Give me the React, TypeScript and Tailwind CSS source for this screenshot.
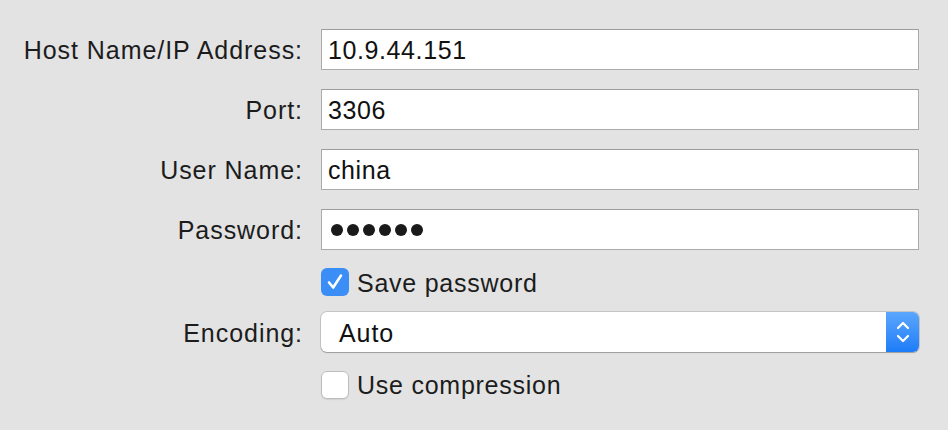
import React from "react";

const font = "font-['Liberation_Sans',Arial,sans-serif]";

type RowProps = {
  label?: string;
  className?: string;
  children: React.ReactNode;
};

function Row({ label, className, children }: RowProps) {
  return (
    <div className={`flex items-center ${className ?? ""}`}>
      <div className="w-[303px] shrink-0 pt-[3px] text-right text-[25px] tracking-[0.95px] text-[#1c1c1c]">
        {label}
      </div>
      <div className="ml-[18px] w-[598px]">{children}</div>
    </div>
  );
}

function TextField({ children }: { children: React.ReactNode }) {
  return (
    <div className="flex h-[41px] items-center border border-[#ababab] border-t-[#9c9c9c] bg-white pl-[6px] pt-[3px] text-[25px] tracking-[0.6px] text-[#111]">
      {children}
    </div>
  );
}

function Checkbox({ checked, label }: { checked: boolean; label: string }) {
  return (
    <div className="flex h-[28px] items-center">
      {checked ? (
        <div className="flex h-[28px] w-[28px] items-center justify-center rounded-[6px] bg-[#3a8ef6]">
          <svg width="20" height="20" viewBox="0 0 20 20" fill="none">
            <path
              d="M4 10.5 L8.2 15.5 L16 3.5"
              stroke="white"
              strokeWidth="2.6"
              strokeLinecap="round"
              strokeLinejoin="round"
            />
          </svg>
        </div>
      ) : (
        <div className="h-[28px] w-[28px] rounded-[6px] border border-[#bdbdbd] bg-white shadow-[0_1px_1px_rgba(0,0,0,0.08)]" />
      )}
      <span className="ml-[8px] pt-[3px] text-[25px] tracking-[0.75px] text-[#1c1c1c]">
        {label}
      </span>
    </div>
  );
}

export default function App() {
  return (
    <div className={`h-[430px] w-[948px] bg-[#e3e3e3] pt-[29px] ${font}`}>
      <Row label="Host Name/IP Address:">
        <TextField>10.9.44.151</TextField>
      </Row>
      <Row label="Port:" className="mt-[19px]">
        <TextField>3306</TextField>
      </Row>
      <Row label="User Name:" className="mt-[19px]">
        <TextField>china</TextField>
      </Row>
      <Row label="Password:" className="mt-[19px]">
        <TextField>
          <div className="-mt-[3px] flex items-center gap-[4px] pl-[3px]">
            {[0, 1, 2, 3, 4, 5].map((i) => (
              <span key={i} className="h-[12px] w-[12px] rounded-full bg-[#1a1a1a]" />
            ))}
          </div>
        </TextField>
      </Row>
      <Row className="mt-[18px]">
        <Checkbox checked label="Save password" />
      </Row>
      <Row label="Encoding:" className="mt-[16px]">
        <div className="flex h-[40px] items-stretch rounded-[6px] bg-white shadow-[0_0_0_1px_rgba(0,0,0,0.13),0_1px_1px_rgba(0,0,0,0.2)]">
          <div className="flex flex-1 items-center pl-[18px] pt-[3px] text-[25px] tracking-[0.9px] text-[#111]">
            Auto
          </div>
          <div className="flex w-[33px] items-center justify-center rounded-r-[6px] bg-gradient-to-b from-[#5aa6fd] to-[#1b7cf8]">
            <svg width="16" height="28" viewBox="0 0 16 28" fill="none">
              <path
                d="M3 10 L8 5 L13 10"
                stroke="white"
                strokeWidth="2.2"
                strokeLinecap="round"
                strokeLinejoin="round"
              />
              <path
                d="M3 18 L8 23 L13 18"
                stroke="white"
                strokeWidth="2.2"
                strokeLinecap="round"
                strokeLinejoin="round"
              />
            </svg>
          </div>
        </div>
      </Row>
      <Row className="mt-[18px]">
        <Checkbox checked={false} label="Use compression" />
      </Row>
    </div>
  );
}
